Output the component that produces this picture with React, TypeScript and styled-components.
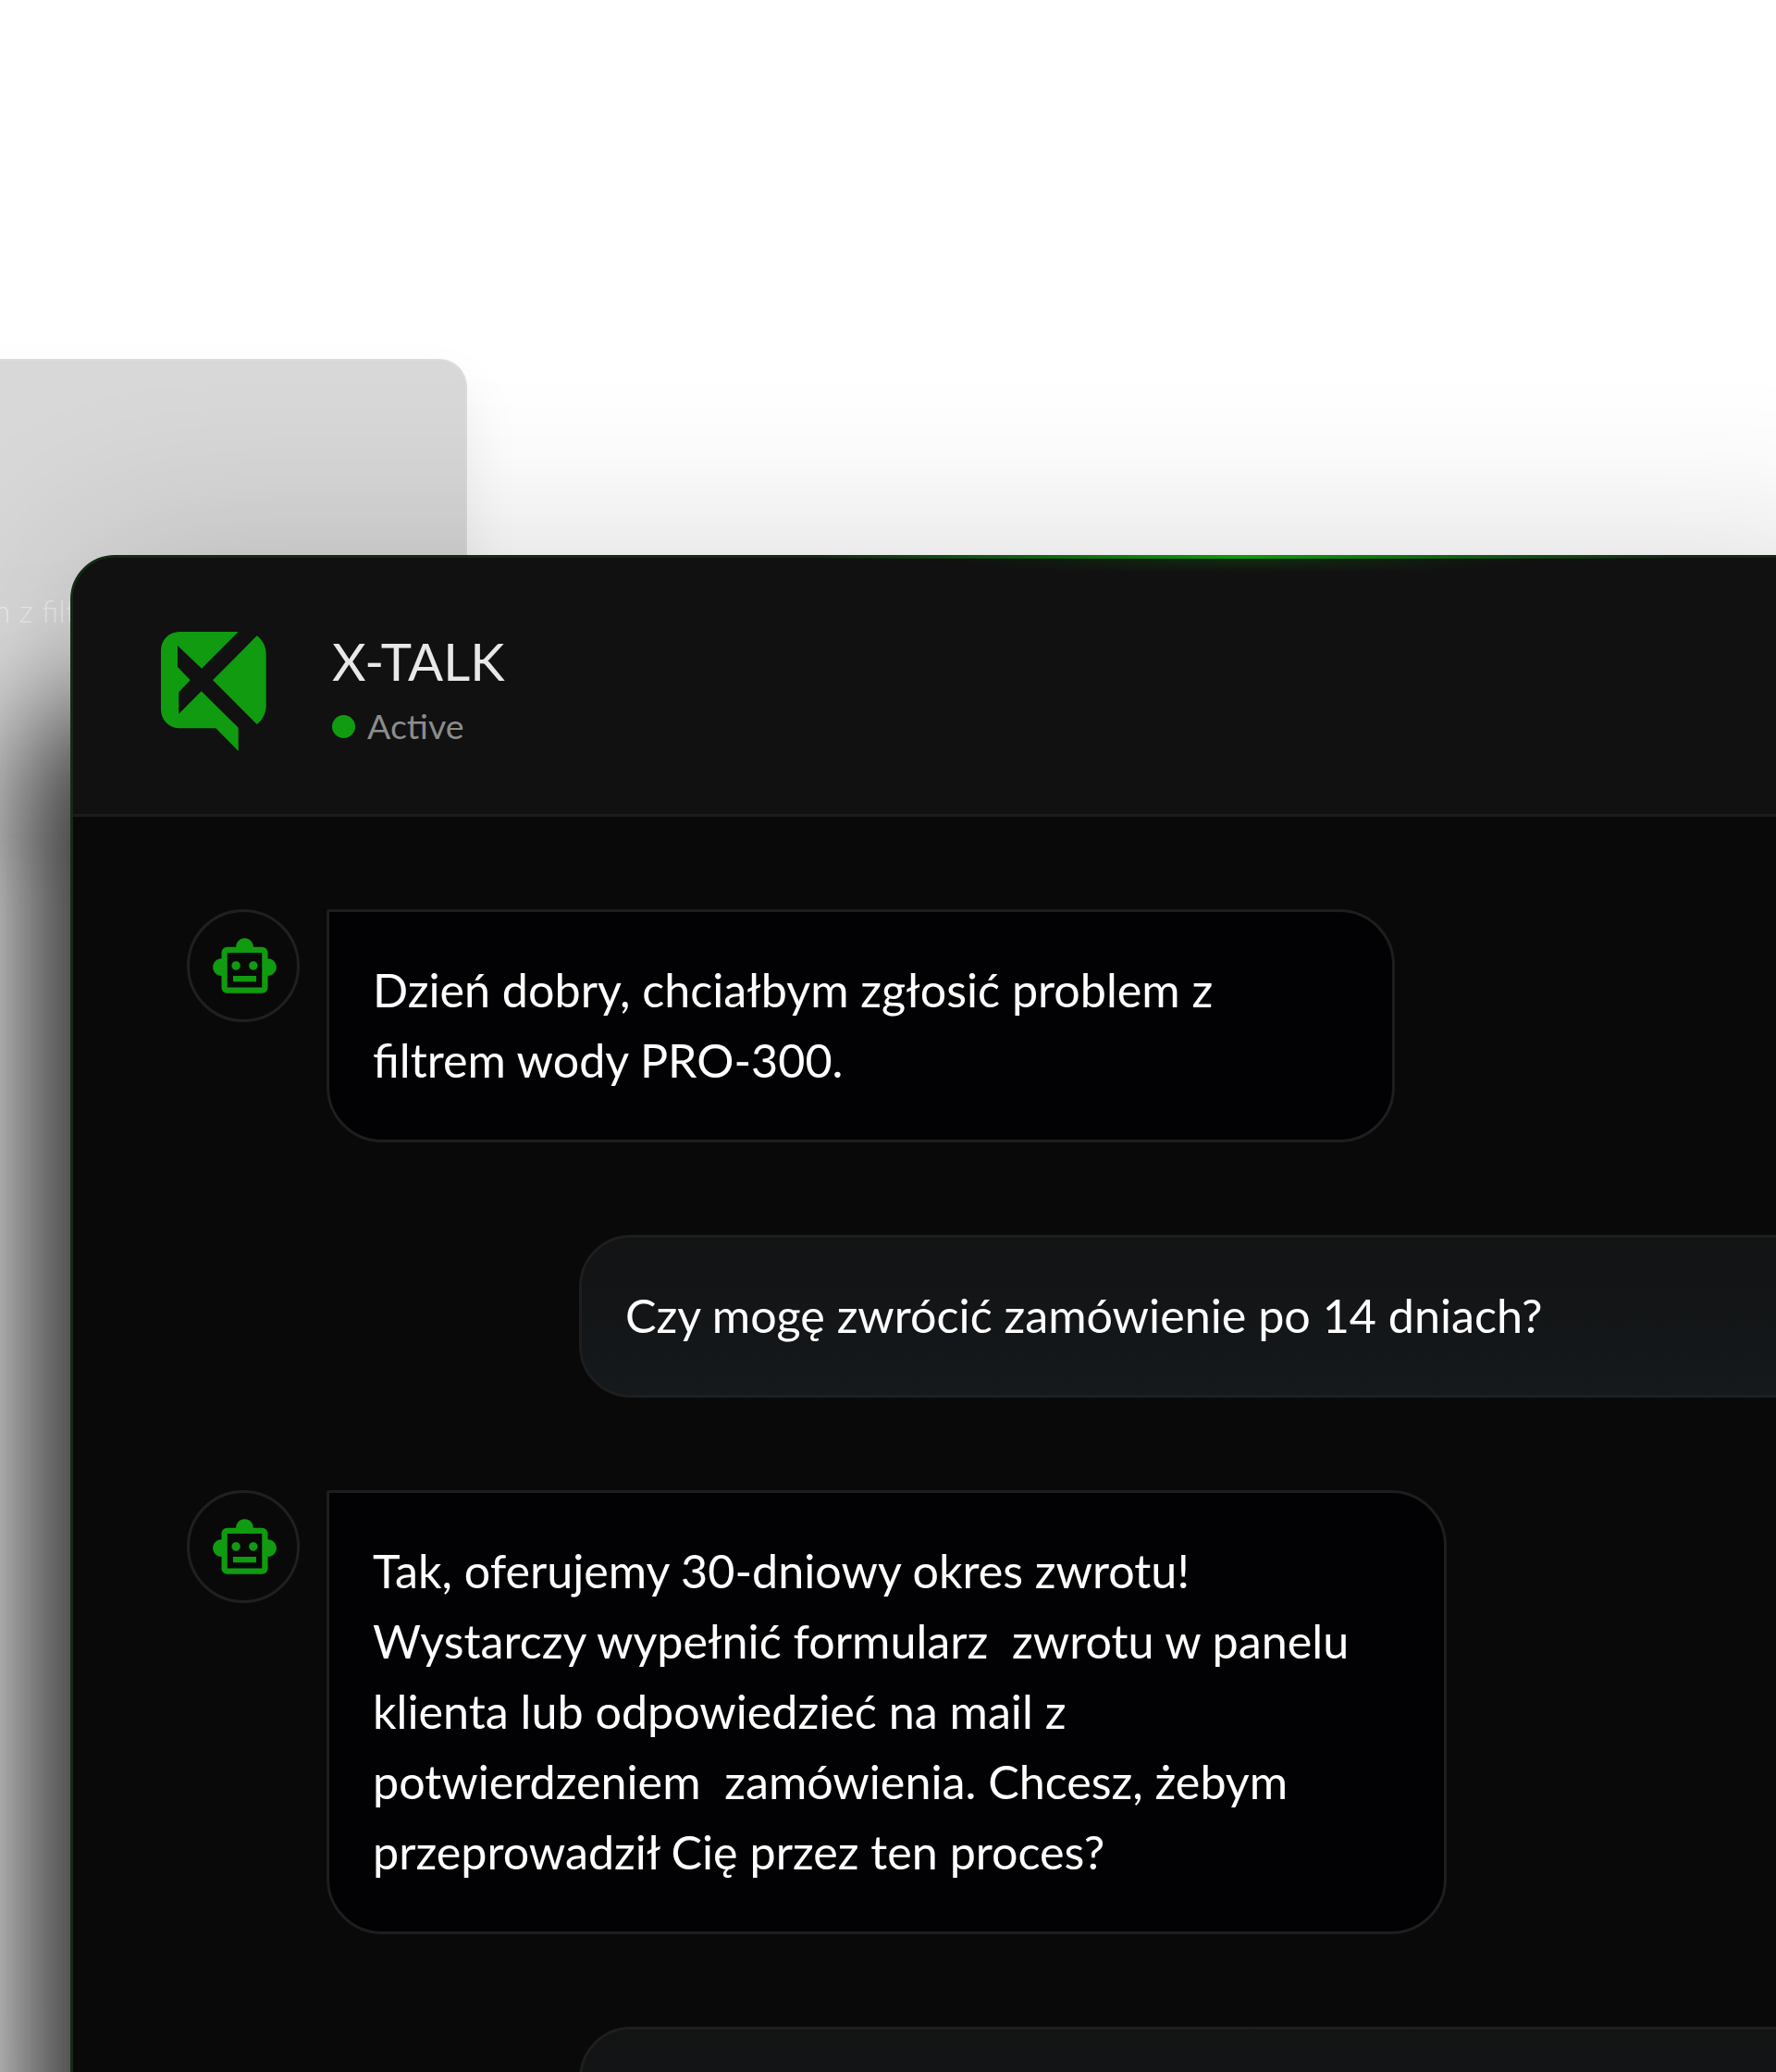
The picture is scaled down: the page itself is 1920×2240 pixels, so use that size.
import styled, { createGlobalStyle } from "styled-components";
import { MdOutlineSmartToy } from "react-icons/md";

const GlobalStyle = createGlobalStyle`
  html, body {
    margin: 0;
    padding: 0;
    background: #ffffff;
    font-family: "Lato", "Noto Sans", sans-serif;
  }
`;

const Page = styled.div`
  position: relative;
  width: 1920px;
  height: 2240px;
  overflow: hidden;
  box-sizing: border-box;
  padding: 600px 0 0 76px;
  background: #ffffff;
`;

const BackCard = styled.div`
  position: absolute;
  top: 388px;
  left: -600px;
  width: 1105px;
  height: 512px;
  box-sizing: border-box;
  padding: 242px 0 0 30px;
  border: 2px solid #dcdcdc;
  border-bottom: 0;
  border-radius: 30px 30px 0 0;
  background: linear-gradient(180deg, #d8d8d8 45%, #f0f0f0 100%);
  box-shadow: 0 30px 60px rgba(0, 0, 0, 0.08);
  color: rgba(255, 255, 255, 0.6);
  font-size: 34px;
  font-weight: 300;
  line-height: 56px;
  white-space: nowrap;
`;

const ChatWindow = styled.div`
  position: relative;
  width: 1960px;
  height: 1800px;
  box-sizing: border-box;
  border: 3px solid #132a15;
  border-radius: 48px;
  background: #090909;
  box-shadow:
    -58px 170px 140px rgba(0, 0, 0, 0.8),
    0 0 200px rgba(0, 0, 0, 0.16);

  &::before {
    content: "";
    position: absolute;
    top: -3px;
    left: 800px;
    width: 930px;
    height: 4px;
    background: linear-gradient(90deg, transparent, #0e9a0e 50%, transparent);
  }

  &::after {
    content: "";
    position: absolute;
    top: 1px;
    left: 950px;
    width: 630px;
    height: 16px;
    background: radial-gradient(50% 100% at 50% 0, rgba(16, 155, 16, 0.18), transparent);
  }
`;

const Header = styled.header`
  display: flex;
  gap: 71px;
  height: 280px;
  box-sizing: border-box;
  padding: 80px 0 0 95px;
  border-bottom: 3px solid #1c1c1c;
  border-radius: 45px 0 0 0;
  background: #111111;
`;

const Logo = styled.svg`
  flex: none;
  width: 114px;
  height: 129px;
  fill: #109b10;
`;

const TitleBlock = styled.div`
  display: flex;
  flex-direction: column;
  gap: 14px;
  margin-top: -3px;
`;

const Title = styled.div`
  color: #e8e8e8;
  font-size: 56.4px;
  font-weight: 400;
  line-height: 68px;
`;

const Status = styled.div`
  display: flex;
  align-items: center;
  gap: 13px;
  color: #8c8c8c;
  font-size: 37.5px;
  font-weight: 400;
  line-height: 46px;
`;

const StatusDot = styled.span`
  width: 25px;
  height: 25px;
  border-radius: 50%;
  background: #109b10;
`;

const Messages = styled.div`
  display: flex;
  flex-direction: column;
  gap: 100px;
  padding: 100px 0 0 123px;
`;

const BotRow = styled.div`
  display: flex;
  align-items: flex-start;
  gap: 29px;
`;

const Avatar = styled.div`
  display: flex;
  flex: none;
  align-items: center;
  justify-content: center;
  width: 122px;
  height: 122px;
  box-sizing: border-box;
  border: 3px solid #202020;
  border-radius: 50%;
  color: #109b10;
  font-size: 75px;

  svg {
    margin: 3px 0 0 3px;
  }
`;

const Bubble = styled.div<{ $width: number }>`
  width: ${(p) => p.$width}px;
  box-sizing: border-box;
  padding: 46px 47px 48px;
  border: 3px solid #1e1e1e;
  border-radius: 3px 60px 60px 60px;
  background: #020204;
  color: #ffffff;
  font-size: 50.25px;
  line-height: 76px;
  white-space: pre-wrap;
`;

const UserBubble = styled.div`
  width: 1500px;
  min-height: 176px;
  margin-left: 424px;
  box-sizing: border-box;
  padding: 46px 47px 47px;
  border: 3px solid #1e1e1e;
  border-radius: 56px;
  background: linear-gradient(180deg, #121313, #15191c);
  color: #ffffff;
  font-size: 50.25px;
  line-height: 76px;
`;

function BotAvatar() {
  return (
    <Avatar>
      <MdOutlineSmartToy />
    </Avatar>
  );
}

export default function App() {
  return (
    <Page>
      <GlobalStyle />
      <BackCard>Dzień dobry, chciałbym zgłosić problem z filtrem wody</BackCard>
      <ChatWindow>
        <Header>
          <Logo viewBox="0 0 114 129">
            <path d="M20 0H83.7L44 39.7 18 15V38L31.7 52.3 19.3 65.3V88.7L43.7 64.3 83.7 103.7V129L59.3 104.3H20A20 20 0 0 1 0 84.3V20A20 20 0 0 1 20 0Z" />
            <path d="M103.7 4.3 56 52.3 103.7 100C110 95 113.7 88 113.7 79V25C113.7 16 110 9 103.7 4.3Z" />
          </Logo>
          <TitleBlock>
            <Title>X-TALK</Title>
            <Status>
              <StatusDot />
              Active
            </Status>
          </TitleBlock>
        </Header>
        <Messages>
          <BotRow>
            <BotAvatar />
            <Bubble $width={1155}>
              {"Dzień dobry, chciałbym zgłosić problem z\nfiltrem wody PRO-300."}
            </Bubble>
          </BotRow>
          <UserBubble>Czy mogę zwrócić zamówienie po 14 dniach?</UserBubble>
          <BotRow>
            <BotAvatar />
            <Bubble $width={1211}>
              {
                "Tak, oferujemy 30-dniowy okres zwrotu!\nWystarczy wypełnić formularz  zwrotu w panelu\nklienta lub odpowiedzieć na mail z\npotwierdzeniem  zamówienia. Chcesz, żebym\nprzeprowadził Cię przez ten proces?"
              }
            </Bubble>
          </BotRow>
          <UserBubble />
        </Messages>
      </ChatWindow>
    </Page>
  );
}
